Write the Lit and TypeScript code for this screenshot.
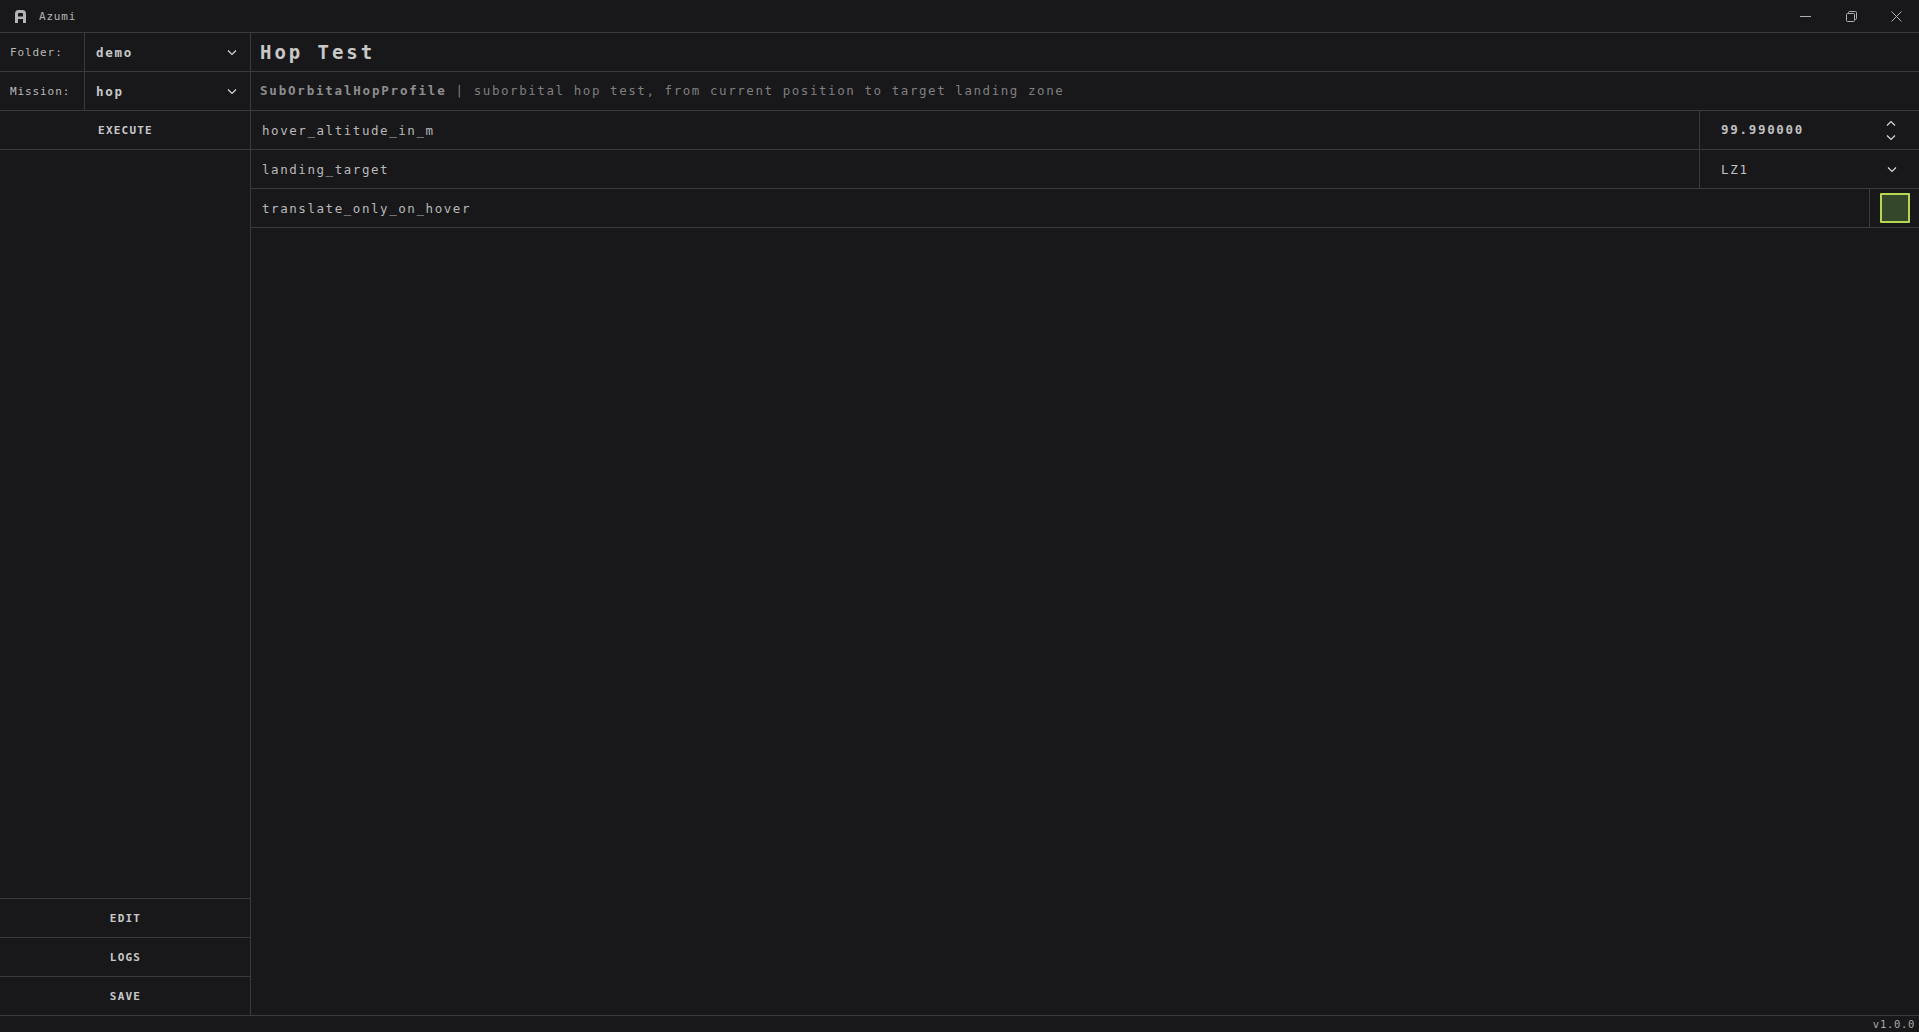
import { LitElement, html, css, svg } from "lit";
import { customElement } from "lit/decorators.js";

const chevDown = svg`<path d="M1 1.5 L5 5.5 L9 1.5" fill="none" stroke="#d8d8d8" stroke-width="1.2"/>`;
const chevUp = svg`<path d="M1 5.5 L5 1.5 L9 5.5" fill="none" stroke="#d8d8d8" stroke-width="1.2"/>`;

@customElement("app-root")
export class AppRoot extends LitElement {
  static styles = css`
    :host {
      display: flex;
      flex-direction: column;
      width: 1919px;
      height: 1032px;
      overflow: hidden;
      background: #18181b;
      color: #c4c4c4;
      font-family: "DejaVu Sans Mono", "Liberation Mono", monospace;
      font-size: 12.5px;
    }
    svg { display: block; flex: none; }
    .titlebar {
      flex: none;
      height: 32px;
      display: flex;
      align-items: center;
      border-bottom: 1px solid #3a3a3c;
    }
    .logo { margin-left: 15px; }
    .app-name { margin-left: 13px; font-size: 11px; letter-spacing: 0.8px; color: #b4b4b4; }
    .win { margin-left: auto; display: flex; align-items: center; padding-right: 17px; }
    .win svg + svg { margin-left: 34px; }
    .win svg:first-child { margin-right: 1px; }
    .body { flex: 1; min-height: 0; display: flex; }
    .side {
      flex: none;
      width: 250px;
      display: flex;
      flex-direction: column;
      border-right: 1px solid #3a3a3c;
    }
    .row {
      flex: none;
      height: 38px;
      display: flex;
      align-items: center;
      border-bottom: 1px solid #3a3a3c;
    }
    .pick-label {
      flex: none;
      align-self: stretch;
      width: 85px;
      padding-left: 10px;
      box-sizing: border-box;
      display: flex;
      align-items: center;
      border-right: 1px solid #3a3a3c;
      font-size: 11px;
      letter-spacing: 0.9px;
      color: #b8b8b8;
    }
    .pick-value {
      flex: 1;
      align-self: stretch;
      display: flex;
      align-items: center;
      justify-content: space-between;
      padding: 0 13px 0 11px;
      font-weight: 700;
      font-size: 12.5px;
      letter-spacing: 1.75px;
      color: #c8c8c8;
    }
    .btn {
      justify-content: center;
      font-weight: 700;
      font-size: 11px;
      letter-spacing: 1.2px;
      padding-left: 1px;
      color: #c8c8c8;
    }
    .spacer { flex: 1; }
    .bottom-first { border-top: 1px solid #3a3a3c; }
    .bottom-last { border-bottom: none; }
    .main { flex: 1; min-width: 0; display: flex; flex-direction: column; }
    .title {
      padding-left: 9px;
      font-size: 19px;
      font-weight: 700;
      letter-spacing: 2.95px;
      color: #c8c8c8;
    }
    .desc {
      padding: 0 0 2px 9px;
      height: 36px;
      color: #7f7f7f;
      font-size: 12.5px;
      letter-spacing: 1.56px;
      white-space: pre;
    }
    .desc b { color: #8e8e8e; letter-spacing: 1.8px; }
    .param { align-items: stretch; }
    .param-name {
      flex: 1;
      padding-left: 11px;
      display: flex;
      align-items: center;
      letter-spacing: 1.56px;
      color: #b8b8b8;
    }
    .param-field {
      flex: none;
      width: 220px;
      box-sizing: border-box;
      border-left: 1px solid #3a3a3c;
      padding: 0 23px 0 21px;
      display: flex;
      align-items: center;
      justify-content: space-between;
      letter-spacing: 1.7px;
      color: #c0c0c0;
      font-weight: 700;
    }
    .num-value { padding-bottom: 2px; }
    .select-field { padding-right: 22px; font-weight: 400; }
    .spin { display: flex; flex-direction: column; gap: 7px; }
    .check-cell {
      flex: none;
      width: 50px;
      box-sizing: border-box;
      border-left: 1px solid #3a3a3c;
      display: flex;
      align-items: center;
      padding-left: 10px;
    }
    .check {
      width: 30px;
      height: 30px;
      box-sizing: border-box;
      border: 2px solid #b4d84f;
      background: #34472b;
      border-radius: 1px;
    }
    .footer {
      flex: none;
      height: 16px;
      border-top: 1px solid #3a3a3c;
      display: flex;
      align-items: center;
      justify-content: flex-end;
      padding-right: 4px;
      font-size: 10.5px;
      letter-spacing: 0.7px;
      color: #a8a8a8;
    }
  `;

  private chev() {
    return html`<svg width="10" height="7" viewBox="0 0 10 7">${chevDown}</svg>`;
  }

  render() {
    return html`
      <div class="titlebar">
        <svg class="logo" width="11" height="13" viewBox="0 0 11 13" aria-hidden="true">
          <path fill-rule="evenodd" fill="#b4b4b4" d="M3.5 0 H7.5 Q11 0 11 4 V13 H8 V9 H3 V13 H0 V4 Q0 0 3.5 0 Z M4 3 Q3 3 3 4 V6.5 H8 V4 Q8 3 7 3 Z"/>
        </svg>
        <span class="app-name">Azumi</span>
        <div class="win">
          <svg width="11" height="11" viewBox="0 0 11 11"><path d="M0 5.5 H11" stroke="#b0b0b0" stroke-width="1"/></svg>
          <svg width="11" height="11" viewBox="0 0 11 11" fill="none" stroke="#b0b0b0" stroke-width="1">
            <rect x="0.5" y="2.5" width="8" height="8" rx="1"/>
            <path d="M2.5 2.5 V1.5 Q2.5 0.5 3.5 0.5 H9.5 Q10.5 0.5 10.5 1.5 V7.5 Q10.5 8.5 9.5 8.5 H8.5"/>
          </svg>
          <svg width="11" height="11" viewBox="0 0 11 11"><path d="M0.5 0.5 L10.5 10.5 M10.5 0.5 L0.5 10.5" stroke="#b0b0b0" stroke-width="1"/></svg>
        </div>
      </div>
      <div class="body">
        <div class="side">
          <div class="row"><div class="pick-label">Folder:</div><div class="pick-value"><span>demo</span>${this.chev()}</div></div>
          <div class="row"><div class="pick-label">Mission:</div><div class="pick-value"><span>hop</span>${this.chev()}</div></div>
          <div class="row btn">EXECUTE</div>
          <div class="spacer"></div>
          <div class="row btn bottom-first">EDIT</div>
          <div class="row btn">LOGS</div>
          <div class="row btn bottom-last">SAVE</div>
        </div>
        <div class="main">
          <div class="row title">Hop Test</div>
          <div class="row desc"><b>SubOrbitalHopProfile</b> | suborbital hop test, from current position to target landing zone</div>
          <div class="row param">
            <div class="param-name">hover_altitude_in_m</div>
            <div class="param-field"><span class="num-value">99.990000</span>
              <div class="spin">
                <svg width="10" height="7" viewBox="0 0 10 7">${chevUp}</svg>
                <svg width="10" height="7" viewBox="0 0 10 7">${chevDown}</svg>
              </div>
            </div>
          </div>
          <div class="row param">
            <div class="param-name">landing_target</div>
            <div class="param-field select-field"><span>LZ1</span>${this.chev()}</div>
          </div>
          <div class="row param">
            <div class="param-name">translate_only_on_hover</div>
            <div class="check-cell"><div class="check"></div></div>
          </div>
        </div>
      </div>
      <div class="footer">v1.0.0</div>
    `;
  }
}
